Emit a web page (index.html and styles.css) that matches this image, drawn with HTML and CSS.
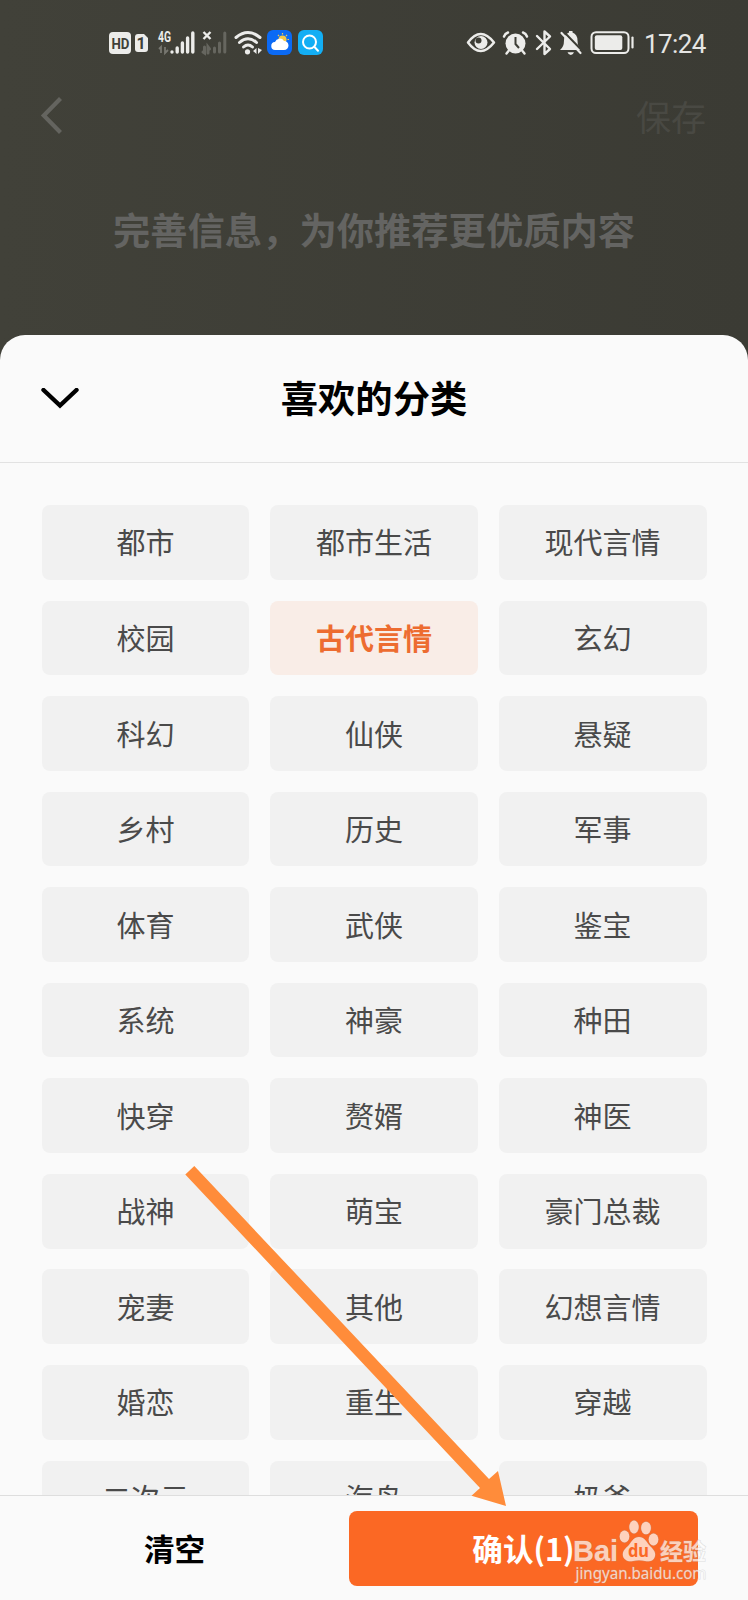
FILE: index.html
```html
<!DOCTYPE html>
<html lang="zh-CN">
<head>
    <meta charset="UTF-8">
    <meta name="viewport" content="width=device-width, initial-scale=1.0">
    <title>喜欢的分类</title>
    <link rel="stylesheet" href="styles.css">
</head>
<body>
    <div class="page">
        <div class="status-bar">
            <svg class="status-left" width="240" height="50" viewBox="0 0 240 50">
                <g fill="#ececea">
                    <rect x="9" y="12" width="22" height="22" rx="4"/>
                    <path d="M38 14h6l4 4v11a3 3 0 0 1-3 3h-7a3 3 0 0 1-3-3V17a3 3 0 0 1 3-3z"/>
                </g>
                <text class="hd" x="11.500" y="28.800" textLength="18" lengthAdjust="spacingAndGlyphs">HD</text>
                <text class="sim" x="41" y="29" text-anchor="middle">1</text>
                <text class="net" x="58" y="21.500" textLength="13" lengthAdjust="spacingAndGlyphs">4G</text>
                <path d="M61 33v-6l-2 2M65 27v6l3-3" fill="none" stroke="#777770" stroke-width="1.8"/>
                <path d="M72 32v0M77.2 32v-4M82.4 32v-9M87.6 32v-14M92.8 32v-19" stroke="#ececea" stroke-width="3.4" stroke-linecap="round"/>
                <path d="M103.500 12l7 7M110.500 12l-7 7" stroke="#ececea" stroke-width="2.400"/>
                <path d="M104.500 27v6l-1.500-1M108 33v-6l1.500 2M114.500 32v-4M119.500 32v-9M124.800 32v-19" stroke="#66665f" stroke-width="3" stroke-linecap="round" fill="none"/>
                <g fill="none" stroke="#ececea" stroke-width="3" stroke-linecap="round">
                    <path d="M136 17.500Q148 7.500 160 17.500"/>
                    <path d="M139.500 22.500Q148 15 156.500 22.500"/>
                    <path d="M143.500 27Q148 23 152.500 27"/>
                </g>
                <circle cx="147.500" cy="31.800" r="2.600" fill="#ececea"/>
                <path d="M153 31l3.500-3v6zM158 28v6l4-4z" fill="#ececea"/>
                <rect x="167" y="10" width="25" height="25" rx="6" fill="#0b6af5"/>
                <circle cx="182.500" cy="19.500" r="4" fill="#f7c948"/>
                <path d="M182.500 13v1.500M187 15l-1 1M178 15l1 1M189 19.500h-1.500M187.500 24l-1-1" stroke="#f7c948" stroke-width="1.200"/>
                <path d="M175.500 30a4 4 0 0 1-.5-8 5 5 0 0 1 9-1 4.500 4.500 0 0 1 0 9z" fill="#fff"/>
                <rect x="198" y="10" width="25" height="25" rx="6" fill="#13aef4"/>
                <circle cx="209.500" cy="22" r="6.500" fill="none" stroke="#fff" stroke-width="2"/>
                <path d="M214.300 26.800l3.700 4" stroke="#fff" stroke-width="2" stroke-linecap="round"/>
            </svg>
            <div class="status-right">
                <svg width="187" height="50" viewBox="0 0 187 50">
                    <path d="M19 22.500Q31.500 5.500 45 22.500Q31.500 39.500 19 22.500z" fill="none" stroke="#ececea" stroke-width="2.500" stroke-linejoin="round"/>
                    <circle cx="32" cy="22.500" r="6.500" fill="#ececea"/>
                    <circle cx="29.500" cy="20.500" r="3" fill="#3d3d35"/>
                    <circle cx="66.500" cy="23.500" r="10" fill="#ececea"/>
                    <path d="M66.500 17v7l3.500 4" fill="none" stroke="#3d3d35" stroke-width="2"/>
                    <path d="M55 16.500q1-3 4-4M74 12.500q3 1 4 4M59.500 31l-2 2.500M73.500 31l2 2.500" fill="none" stroke="#ececea" stroke-width="2.400" stroke-linecap="round"/>
                    <path d="M88 16l13 13-5.500 5V11.500l5.500 5L88 29" fill="none" stroke="#ececea" stroke-width="2.400" stroke-linejoin="round" stroke-linecap="round"/>
                    <path d="M111 30q4-3 4-9.500 0-6 5-8v-1.500h3.500v1.500q5 2 5 8 0 6.500 4 9.500z" fill="#ececea"/>
                    <path d="M118.500 32.200h6.500q-1 2.800-3.200 2.800t-3.300-2.800z" fill="#ececea"/>
                    <path d="M114.500 11.500L133.500 31" stroke="#3d3d35" stroke-width="2"/>
                    <path d="M112.500 13L131.500 33" stroke="#ececea" stroke-width="2.200" stroke-linecap="round"/>
                    <rect x="142.500" y="12.200" width="37" height="20.800" rx="4.500" fill="none" stroke="#ececea" stroke-width="2"/>
                    <rect x="145.800" y="15.200" width="27.500" height="14.800" rx="2" fill="#ececea"/>
                    <path d="M183.500 17.500v10" stroke="#ececea" stroke-width="2.200" stroke-linecap="round"/>
                </svg>
                <span class="time">17:24</span>
            </div>
        </div>
        <div class="nav">
            <svg width="24" height="40" viewBox="0 0 24 40">
                <path d="M20.500 2.500L3.800 19.500l16.700 17" fill="none" stroke="#64645f" stroke-width="4.200"/>
            </svg>
            <span class="save">保存</span>
        </div>
        <h1 class="headline">完善信息，为你推荐更优质内容</h1>
    </div>

    <div class="sheet">
        <div class="sheet-header">
            <svg class="close" width="38" height="22" viewBox="0 0 38 22">
                <path d="M2.500 2L19 17.500l16.500-15.500" fill="none" stroke="#000" stroke-width="4.400" stroke-linecap="round"/>
            </svg>
            <h2>喜欢的分类</h2>
        </div>
        <div class="tags">
            <div class="tag">都市</div>
            <div class="tag">都市生活</div>
            <div class="tag">现代言情</div>
            <div class="tag">校园</div>
            <div class="tag active">古代言情</div>
            <div class="tag">玄幻</div>
            <div class="tag">科幻</div>
            <div class="tag">仙侠</div>
            <div class="tag">悬疑</div>
            <div class="tag">乡村</div>
            <div class="tag">历史</div>
            <div class="tag">军事</div>
            <div class="tag">体育</div>
            <div class="tag">武侠</div>
            <div class="tag">鉴宝</div>
            <div class="tag">系统</div>
            <div class="tag">神豪</div>
            <div class="tag">种田</div>
            <div class="tag">快穿</div>
            <div class="tag">赘婿</div>
            <div class="tag">神医</div>
            <div class="tag">战神</div>
            <div class="tag">萌宝</div>
            <div class="tag">豪门总裁</div>
            <div class="tag">宠妻</div>
            <div class="tag">其他</div>
            <div class="tag">幻想言情</div>
            <div class="tag">婚恋</div>
            <div class="tag">重生</div>
            <div class="tag">穿越</div>
            <div class="tag">二次元</div>
            <div class="tag">海岛</div>
            <div class="tag">奶爸</div>
        </div>
        <div class="footer">
            <div class="clear">清空</div>
            <div class="confirm">确认(1)</div>
        </div>
    </div>

    <svg class="arrow" width="330" height="350" viewBox="180 1160 330 350">
        <path d="M194.300 1166L489 1479l9-8 8 35-34.500-10.300 8.500-7.700L185.300 1174.500z" fill="#ff8c3a"/>
    </svg>

    <svg class="watermark" width="150" height="76" viewBox="0 0 150 76">
        <g class="mark">
            <text class="brand" x="3" y="45" textLength="45" lengthAdjust="spacingAndGlyphs">Bai</text>
            <ellipse cx="54.500" cy="20.500" rx="4.800" ry="6"/>
            <ellipse cx="64" cy="11" rx="4.700" ry="6.500"/>
            <ellipse cx="76" cy="12" rx="4.900" ry="6.300"/>
            <ellipse cx="83.500" cy="23.500" rx="4.800" ry="6"/>
            <path d="M69 21c5 0 7 4 10 8 4 4 7 7 6 11-1 5-6 6-10 5q-6-1.500-12 0c-5 1-9-1-10-5-1-5 3-8 6-11 3-4 5-8 10-8z"/>
            <text class="exp" x="90" y="43.500" textLength="46" lengthAdjust="spacingAndGlyphs">经验</text>
            <text class="url" x="5.500" y="62.500" textLength="131" lengthAdjust="spacingAndGlyphs">jingyan.baidu.com</text>
        </g>
        <text class="du" x="58" y="41" textLength="21" lengthAdjust="spacingAndGlyphs">du</text>
    </svg>
</body>
</html>
```
FILE: styles.css
```css
* {
    box-sizing: border-box;
}
body {
    margin: 0;
    position: relative;
    width: 748px;
    height: 1600px;
    overflow: hidden;
    display: flex;
    flex-direction: column;
    background: linear-gradient(90deg, #414139, #3b3b34);
    font-family: "Noto Sans CJK SC", sans-serif;
}
.page {
    height: 335px;
    flex: none;
}
.status-bar {
    display: flex;
    justify-content: space-between;
    height: 70px;
    padding: 20px 42px 0 100px;
}
.status-right {
    display: flex;
}
.hd {
    font: bold 15.5px Roboto, sans-serif;
    fill: #3f3f38;
}
.sim {
    font: bold 16px Roboto, sans-serif;
    fill: #3f3f38;
}
.net {
    font: bold 14.5px Roboto, sans-serif;
    fill: #ececea;
}
.time {
    margin-left: 8px;
    width: 62px;
    font-family: Roboto, sans-serif;
    font-size: 26px;
    line-height: 49px;
    letter-spacing: -0.6px;
    color: #e6e6e4;
    white-space: nowrap;
}
.nav {
    display: flex;
    justify-content: space-between;
    align-items: center;
    height: 92px;
    padding: 0 42px 0 40px;
}
.save {
    font-size: 35px;
    line-height: 50px;
    padding-bottom: 1px;
    color: #494943;
}
.headline {
    margin: 40px 0 0;
    font-size: 37.3px;
    line-height: 54px;
    text-align: center;
    color: #646462;
}
.sheet {
    flex: 1;
    min-height: 0;
    display: flex;
    flex-direction: column;
    background: #fafafa;
    border-radius: 25px 25px 0 0;
    overflow: hidden;
}
.sheet-header {
    flex: none;
    display: grid;
    grid-template-columns: 38px 1fr 38px;
    align-items: center;
    height: 128px;
    padding: 0 41px;
    border-bottom: 1px solid #e2e2e2;
}
.sheet-header h2 {
    margin: 0;
    padding-bottom: 3px;
    font-size: 37.3px;
    line-height: 54px;
    text-align: center;
    color: #000;
}
.tags {
    flex: 1;
    min-height: 0;
    display: grid;
    grid-template-columns: repeat(3, 1fr);
    grid-auto-rows: 74.6px;
    gap: 20.95px 20.6px;
    padding: 42.2px 41.5px 0;
    overflow: hidden;
}
.tag {
    display: flex;
    justify-content: center;
    align-items: center;
    padding-bottom: 2px;
    background: #f1f1f1;
    border-radius: 8px;
    font-size: 29px;
    line-height: 42px;
    color: #4a4a4a;
}
.tag.active {
    background: #f9ede7;
    color: #ed6c30;
    font-weight: bold;
}
.footer {
    flex: none;
    display: grid;
    grid-template-columns: 349px 349px;
    align-items: center;
    height: 105px;
    border-top: 1px solid #dedede;
    font-size: 30.6px;
    font-weight: bold;
    text-align: center;
}
.clear {
    color: #000;
}
.confirm {
    height: 75px;
    line-height: 75px;
    border-radius: 8px;
    background: #fb6824;
    color: #fff;
}
.arrow {
    position: absolute;
    left: 180px;
    top: 1160px;
}
.watermark {
    position: absolute;
    left: 570px;
    top: 1516px;
}
.mark {
    fill: #fff;
    fill-opacity: 0.7;
    stroke: #aaa;
    stroke-opacity: 0.35;
    stroke-width: 1px;
    paint-order: stroke;
}
.brand {
    font: bold 29px "Liberation Sans", sans-serif;
}
.exp {
    font: bold 23px "Noto Sans CJK SC", sans-serif;
}
.url {
    font: 15.5px "Noto Sans", sans-serif;
}
.du {
    font: bold 18px "Noto Sans", sans-serif;
    fill: #fb6824;
}
```
